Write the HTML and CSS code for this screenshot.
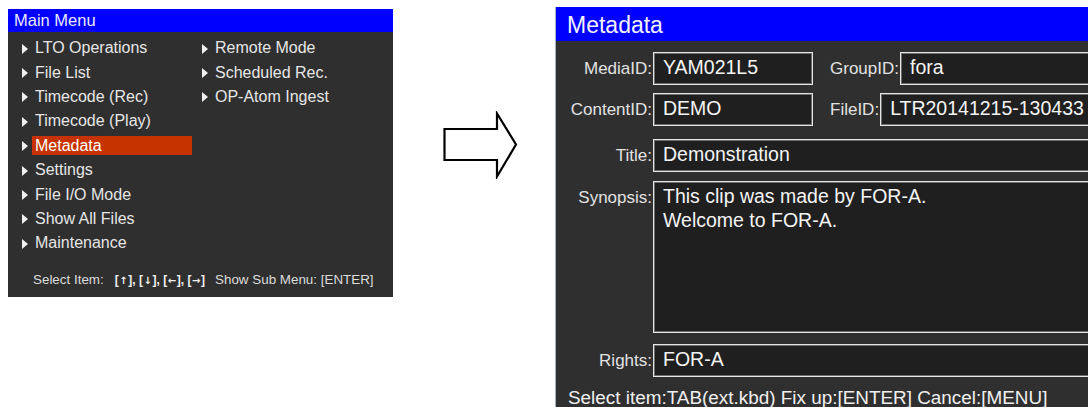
FILE: index.html
```html
<!DOCTYPE html>
<html lang="en">
<head>
<meta charset="utf-8">
<title>Main Menu / Metadata</title>
<link rel="stylesheet" href="styles.css">
</head>
<body>
<div class="page">
  <section class="menu">
    <div class="menu-title">Main Menu</div>
    <div class="menu-body">
      <ul class="menu-grid">
        <li class="item"><span class="tri"></span><span class="lbl">LTO Operations</span></li>
        <li class="item"><span class="tri"></span><span class="lbl">File List</span></li>
        <li class="item"><span class="tri"></span><span class="lbl">Timecode (Rec)</span></li>
        <li class="item"><span class="tri"></span><span class="lbl">Timecode (Play)</span></li>
        <li class="item"><span class="tri"></span><span class="lbl sel">Metadata</span></li>
        <li class="item"><span class="tri"></span><span class="lbl">Settings</span></li>
        <li class="item"><span class="tri"></span><span class="lbl">File I/O Mode</span></li>
        <li class="item"><span class="tri"></span><span class="lbl">Show All Files</span></li>
        <li class="item"><span class="tri"></span><span class="lbl">Maintenance</span></li>
        <li class="item"><span class="tri"></span><span class="lbl">Remote Mode</span></li>
        <li class="item"><span class="tri"></span><span class="lbl">Scheduled Rec.</span></li>
        <li class="item"><span class="tri"></span><span class="lbl">OP-Atom Ingest</span></li>
      </ul>
      <div class="menu-foot">
        <span>Select Item:</span>
        <span class="keys">[<b>↑</b>], [<b>↓</b>], [<b>←</b>], [<b>→</b>]</span>
        <span>Show Sub Menu: [ENTER]</span>
      </div>
    </div>
  </section>

  <svg class="arrow" width="75" height="68" viewBox="0 0 75 68" aria-hidden="true">
    <polygon points="1.5,18 54,18 54,2.5 73,33.5 54,65.5 54,49 1.5,49" fill="#fff" stroke="#000" stroke-width="2.2" stroke-linejoin="miter"/>
  </svg>

  <section class="meta">
    <div class="meta-title">Metadata</div>
    <div class="meta-body">
      <div class="row r1">
        <span class="lab">MediaID:</span>
        <span class="box short">YAM021L5</span>
        <span class="lab2">GroupID:</span>
        <span class="box wide">fora</span>
      </div>
      <div class="row r2">
        <span class="lab">ContentID:</span>
        <span class="box short">DEMO</span>
        <span class="lab2">FileID:</span>
        <span class="box wide">LTR20141215-130433</span>
      </div>
      <div class="row r3">
        <span class="lab">Title:</span>
        <span class="box wide">Demonstration</span>
      </div>
      <div class="row r4">
        <span class="lab">Synopsis:</span>
        <span class="box wide multi">This clip was made by FOR-A.<br>Welcome to FOR-A.</span>
      </div>
      <div class="row r5">
        <span class="lab">Rights:</span>
        <span class="box wide">FOR-A</span>
      </div>
      <div class="meta-foot">Select item:TAB(ext.kbd) Fix up:[ENTER] Cancel:[MENU]</div>
    </div>
  </section>
</div>
</body>
</html>
```

FILE: styles.css
```css
html, body {
  margin: 0;
  padding: 0;
  background: #ffffff;
  overflow: hidden;
}

body {
  font-family: "Liberation Sans", Arial, sans-serif;
}

.page {
  display: flex;
  align-items: flex-start;
  width: 1300px;
}

/* ---------- Main menu ---------- */
.menu {
  flex: 0 0 385px;
  margin: 9px 0 0 8px;
}

.menu-title {
  height: 23px;
  line-height: 23px;
  background: #0000ff;
  color: #e8e8ff;
  font-size: 16.5px;
  padding-left: 6px;
}

.menu-body {
  box-sizing: border-box;
  height: 265px;
  background: #2f2f2f;
  padding: 3.5px 0 0 14px;
}

.menu-grid {
  list-style: none;
  margin: 0;
  padding: 0;
  display: grid;
  grid-template-rows: repeat(9, 24.4px);
  grid-template-columns: 180px 180px;
  grid-auto-flow: column;
}

.item {
  display: flex;
  align-items: center;
  color: #e6e6e6;
  font-size: 16px;
}

.tri {
  width: 0;
  height: 0;
  border-left: 6px solid #f0f0f0;
  border-top: 5.5px solid transparent;
  border-bottom: 5.5px solid transparent;
  margin-right: 4px;
  margin-top: 2px;
}

.lbl {
  box-sizing: border-box;
  width: 160px;
  height: 19px;
  line-height: 19px;
  padding-left: 3px;
  white-space: nowrap;
}

.lbl.sel {
  background: #c63300;
  color: #ffffff;
}

.menu-foot {
  display: flex;
  align-items: baseline;
  margin: 16.5px 0 0 11px;
  font-size: 13.4px;
  line-height: 16px;
  color: #dcdcdc;
  white-space: nowrap;
}

.keys {
  font-size: 12px;
  font-weight: bold;
  margin: 0 10px 0 11px;
  color: #f0f0f0;
}

.keys b {
  font-family: "DejaVu Sans", sans-serif;
  font-size: 10px;
  font-weight: bold;
  display: inline-block;
  margin: 0 0.6px;
}

/* ---------- Arrow ---------- */
.arrow {
  flex: 0 0 auto;
  margin: 111px 0 0 50px;
}

/* ---------- Metadata ---------- */
.meta {
  flex: 0 0 620px;
  margin: 7px 0 0 37px;
  border-left: 1px solid #9fb0c8;
}

.meta-title {
  box-sizing: border-box;
  height: 34px;
  padding: 2px 0 0 11px;
  line-height: 32px;
  background: #0000ff;
  color: #f2f2ff;
  font-size: 23px;
}

.meta-body {
  background: #2f2f2f;
  padding: 11px 0 20px 0;
  display: flex;
  flex-direction: column;
}

.row {
  display: flex;
  align-items: baseline;
}

.r2 { margin-top: 8px; }
.r3 { margin-top: 13px; }
.r4 { margin-top: 9px; }
.r5 { margin-top: 11px; }

.lab {
  box-sizing: border-box;
  flex: 0 0 97px;
  text-align: right;
  padding-right: 1px;
  font-size: 17px;
  color: #e2e2e2;
  white-space: nowrap;
}

.lab2 {
  margin-left: 17px;
  padding-right: 1px;
  font-size: 17px;
  color: #e2e2e2;
  white-space: nowrap;
}

.box {
  box-sizing: border-box;
  height: 33px;
  padding: 0 9px;
  line-height: 29px;
  background: #1f1f1f;
  border: 1px solid #e6e6e6;
  box-shadow: inset 0 0 0 1px #6c6c6c;
  color: #f4f4f4;
  font-size: 19.5px;
  white-space: nowrap;
}

.box.short {
  flex: 0 0 160px;
}

.box.wide {
  flex: 1 1 auto;
}

.box.multi {
  height: 152px;
  padding-top: 3px;
  line-height: 23.5px;
}

.meta-foot {
  margin: 10px 0 0 12px;
  font-size: 18.9px;
  line-height: 22px;
  color: #f0f0f0;
  white-space: nowrap;
}
```
